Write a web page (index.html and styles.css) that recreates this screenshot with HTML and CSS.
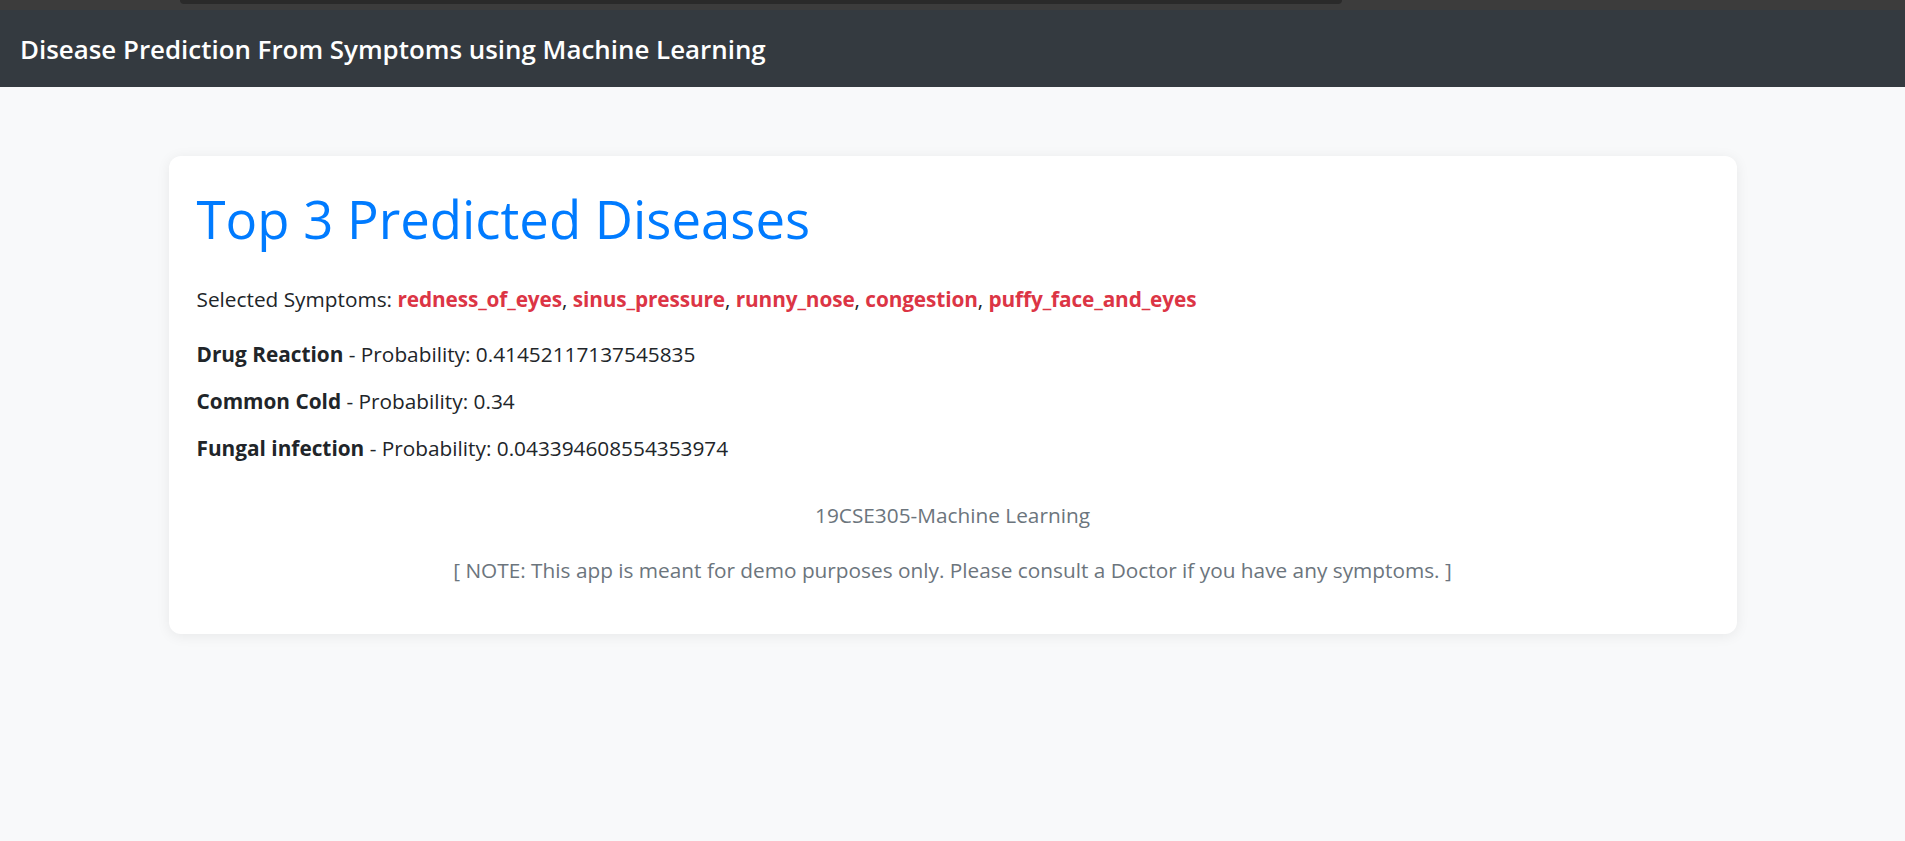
FILE: index.html
```html
<!DOCTYPE html>
<html lang="en">
<head>
<meta charset="utf-8">
<title>Disease Prediction From Symptoms using Machine Learning</title>
<link rel="stylesheet" href="styles.css">
</head>
<body>
<div class="topstrip"><div class="topstrip-bar"></div></div>
<nav class="navbar">
  <span class="brand">Disease Prediction From Symptoms using Machine Learning</span>
</nav>
<main class="main">
  <section class="card">
    <h1 class="title">Top 3 Predicted Diseases</h1>
    <p class="selected">Selected Symptoms: <span class="sym">redness_of_eyes</span>, <span class="sym">sinus_pressure</span>, <span class="sym">runny_nose</span>, <span class="sym">congestion</span>, <span class="sym">puffy_face_and_eyes</span></p>
    <p class="result"><strong>Drug Reaction</strong> - Probability: 0.41452117137545835</p>
    <p class="result"><strong>Common Cold</strong> - Probability: 0.34</p>
    <p class="result"><strong>Fungal infection</strong> - Probability: 0.043394608554353974</p>
    <p class="course">19CSE305-Machine Learning</p>
    <p class="note">[ NOTE: This app is meant for demo purposes only. Please consult a Doctor if you have any symptoms. ]</p>
  </section>
</main>
</body>
</html>
```
FILE: styles.css
```css
* { box-sizing: border-box; }
html, body { margin: 0; padding: 0; }
body {
  background: #f8f9fa;
  font-family: "Open Sans", "Liberation Sans", sans-serif;
  font-size: 20.8px;
  line-height: 30px;
  color: #212529;
  height: 841px;
  overflow: hidden;
}
.topstrip {
  height: 10px;
  background: #3c3c3c;
  padding-left: 180px;
}
.topstrip-bar {
  width: 1162px;
  height: 4px;
  background: #2a2a2a;
  border-radius: 0 0 5px 5px;
}
.navbar {
  height: 77px;
  background: #343a40;
  padding: 24px 0 0 20px;
}
.brand {
  display: block;
  color: #fff;
  font-size: 25.9px;
  line-height: 30px;
  font-weight: 600;
}
.main {
  padding-top: 69px;
}
.card {
  width: 1568px;
  margin: 0 auto;
  background: #fff;
  border-radius: 12px;
  box-shadow: 0 2px 14px rgba(0, 0, 0, 0.07);
  padding: 30px 28px 0;
  display: flex;
  flex-direction: column;
}
.title {
  margin: 0 0 33px;
  font-size: 52.7px;
  line-height: 65px;
  font-weight: 400;
  color: #007bff;
}
.card p { margin: 0; }
.selected { margin-bottom: 25px !important; }
.sym { color: #dc3545; font-weight: 700; letter-spacing: -0.12px; }
.result { margin-bottom: 17px !important; }
.result strong { font-weight: 700; }
.course {
  margin-top: 20px !important;
  text-align: center;
  color: #6c757d;
}
.note {
  margin-top: 25px !important;
  margin-bottom: 49px !important;
  text-align: center;
  color: #6c757d;
}
```
